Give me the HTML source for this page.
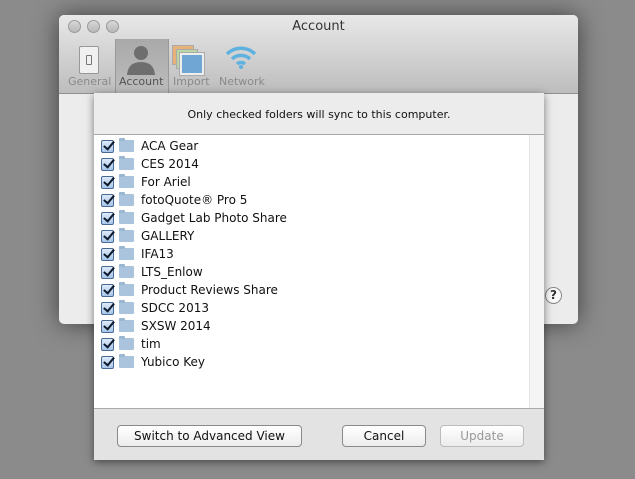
<!DOCTYPE html>
<html><head><style>
body{margin:0;width:635px;height:479px;background:#8b8b8b;position:relative;overflow:hidden;font-family:"DejaVu Sans","Liberation Sans",sans-serif;}
.win{position:absolute;left:59px;top:15px;width:519px;height:309px;background:#ececec;border-radius:5px;box-shadow:0 0 25px rgba(0,0,0,.55);overflow:hidden}
.tb{position:absolute;left:0;top:0;width:519px;height:78px;background:linear-gradient(#e8e8e8,#bdbdbd);border-bottom:1px solid #8f8f8f}
.title{position:absolute;top:4px;width:100%;text-align:center;font-size:13px;color:#333}
.dot{position:absolute;top:5px;width:11px;height:11px;border-radius:50%;background:linear-gradient(#d8d8d8,#b8b8b8);border:1px solid #9a9a9a}
.lbl{position:absolute;top:60px;font-size:11px;color:#8a8a8a}
.sel{position:absolute;left:56px;top:24px;width:52px;height:54px;background:linear-gradient(#a9a9a9,#bdbdbd);border-left:1px solid #999;border-right:1px solid #999}
.sheet{position:absolute;left:94px;top:93px;width:450px;height:367px;background:#e3e3e3;box-shadow:0 2px 8px rgba(0,0,0,.5)}
.hdr{position:absolute;left:0;top:0;width:450px;height:41px;background:#ececec;border-bottom:1px solid #a8a8a8;font-size:11px;text-align:center;line-height:44px;color:#111}
.list{position:absolute;left:0;top:42px;width:450px;height:273px;background:#fff;border-bottom:1px solid #aaa}
.sb{position:absolute;right:0;top:0;width:14px;height:273px;background:#f5f5f5;border-left:1px solid #e6e6e6}
.row{position:absolute;left:7px;height:18px;font-size:12px;color:#111;line-height:18px}
.cb{position:absolute;left:0;top:4px;width:11px;height:11px;border:1px solid #4a6a96;border-radius:2px;background:linear-gradient(#dce9f8,#a8c6ea)}
.cb::after{content:"";position:absolute;left:4px;top:-2px;width:4px;height:9px;border-right:2.5px solid #0e1a2c;border-bottom:2.5px solid #0e1a2c;transform:rotate(40deg)}
.fd{position:absolute;left:18px;top:4px;width:15px;height:12px;background:#a9c4dc;border-radius:1px}
.fd::before{content:"";position:absolute;left:0;top:-2px;width:6px;height:3px;background:#9bb6d0;border-radius:1px 1px 0 0}
.row span{position:absolute;left:40px;top:1px;white-space:nowrap}
.btn{position:absolute;top:332px;height:20px;border:1px solid #8a8a8a;border-radius:4px;background:linear-gradient(#fff,#ececec);font-size:12px;text-align:center;line-height:20px;color:#111}
</style></head><body>
<div class="win">
<div class="tb">
<div class="dot" style="left:9px"></div><div class="dot" style="left:28px"></div><div class="dot" style="left:47px"></div>
<div class="title">Account</div>
<div class="sel"></div>
<div style="position:absolute;left:20px;top:31px;width:18px;height:26px;background:#f0f0f0;border:1px solid #999;border-radius:2px"><div style="margin:8px auto 0;width:4px;height:8px;border:1px solid #777;border-radius:1px"></div></div>
<svg style="position:absolute;left:66px;top:28px" width="32" height="32"><circle cx="16" cy="10" r="7" fill="#6e6e6e"/><path d="M2 32 Q3 19 16 19 Q29 19 30 32Z" fill="#6e6e6e"/></svg>
<div style="position:absolute;left:113px;top:30px;width:20px;height:18px;background:#e6b27a;border:1px solid #aaa"></div>
<div style="position:absolute;left:117px;top:34px;width:20px;height:18px;background:#b9d6a4;border:1px solid #aaa"></div>
<div style="position:absolute;left:121px;top:38px;width:20px;height:18px;background:#6fa6d4;border:2px solid #eee;outline:1px solid #aaa"></div>
<svg style="position:absolute;left:165px;top:29px" width="34" height="26"><g fill="none" stroke="#5fb2e0" stroke-width="3.5"><path d="M3 10 A20 20 0 0 1 31 10"/><path d="M8 15 A13 13 0 0 1 26 15"/><path d="M13 20 A6 6 0 0 1 21 20"/></g><circle cx="17" cy="23" r="2" fill="#5fb2e0"/></svg>
<div class="lbl" style="left:9px">General</div><div class="lbl" style="left:60px;color:#555">Account</div><div class="lbl" style="left:114px">Import</div><div class="lbl" style="left:160px">Network</div>
</div>
<div style="position:absolute;left:486px;top:272px;width:15px;height:15px;border:1px solid #888;border-radius:50%;background:#fafafa;font-size:12px;font-weight:bold;text-align:center;line-height:15px;color:#333">?</div>
</div>
<div class="sheet">
<div class="hdr">Only checked folders will sync to this computer.</div>
<div class="list"><div class="sb"></div>
<div class="row" style="top:1px"><div class="cb"></div><div class="fd"></div><span>ACA Gear</span></div>
<div class="row" style="top:19px"><div class="cb"></div><div class="fd"></div><span>CES 2014</span></div>
<div class="row" style="top:37px"><div class="cb"></div><div class="fd"></div><span>For Ariel</span></div>
<div class="row" style="top:55px"><div class="cb"></div><div class="fd"></div><span>fotoQuote® Pro 5</span></div>
<div class="row" style="top:73px"><div class="cb"></div><div class="fd"></div><span>Gadget Lab Photo Share</span></div>
<div class="row" style="top:91px"><div class="cb"></div><div class="fd"></div><span>GALLERY</span></div>
<div class="row" style="top:109px"><div class="cb"></div><div class="fd"></div><span>IFA13</span></div>
<div class="row" style="top:127px"><div class="cb"></div><div class="fd"></div><span>LTS_Enlow</span></div>
<div class="row" style="top:145px"><div class="cb"></div><div class="fd"></div><span>Product Reviews Share</span></div>
<div class="row" style="top:163px"><div class="cb"></div><div class="fd"></div><span>SDCC 2013</span></div>
<div class="row" style="top:181px"><div class="cb"></div><div class="fd"></div><span>SXSW 2014</span></div>
<div class="row" style="top:199px"><div class="cb"></div><div class="fd"></div><span>tim</span></div>
<div class="row" style="top:217px"><div class="cb"></div><div class="fd"></div><span>Yubico Key</span></div>
</div>
<div class="btn" style="left:23px;width:183px">Switch to Advanced View</div>
<div class="btn" style="left:248px;width:82px">Cancel</div>
<div class="btn" style="left:346px;width:82px;color:#999;border-color:#bbb">Update</div>
</div>
</body></html>
